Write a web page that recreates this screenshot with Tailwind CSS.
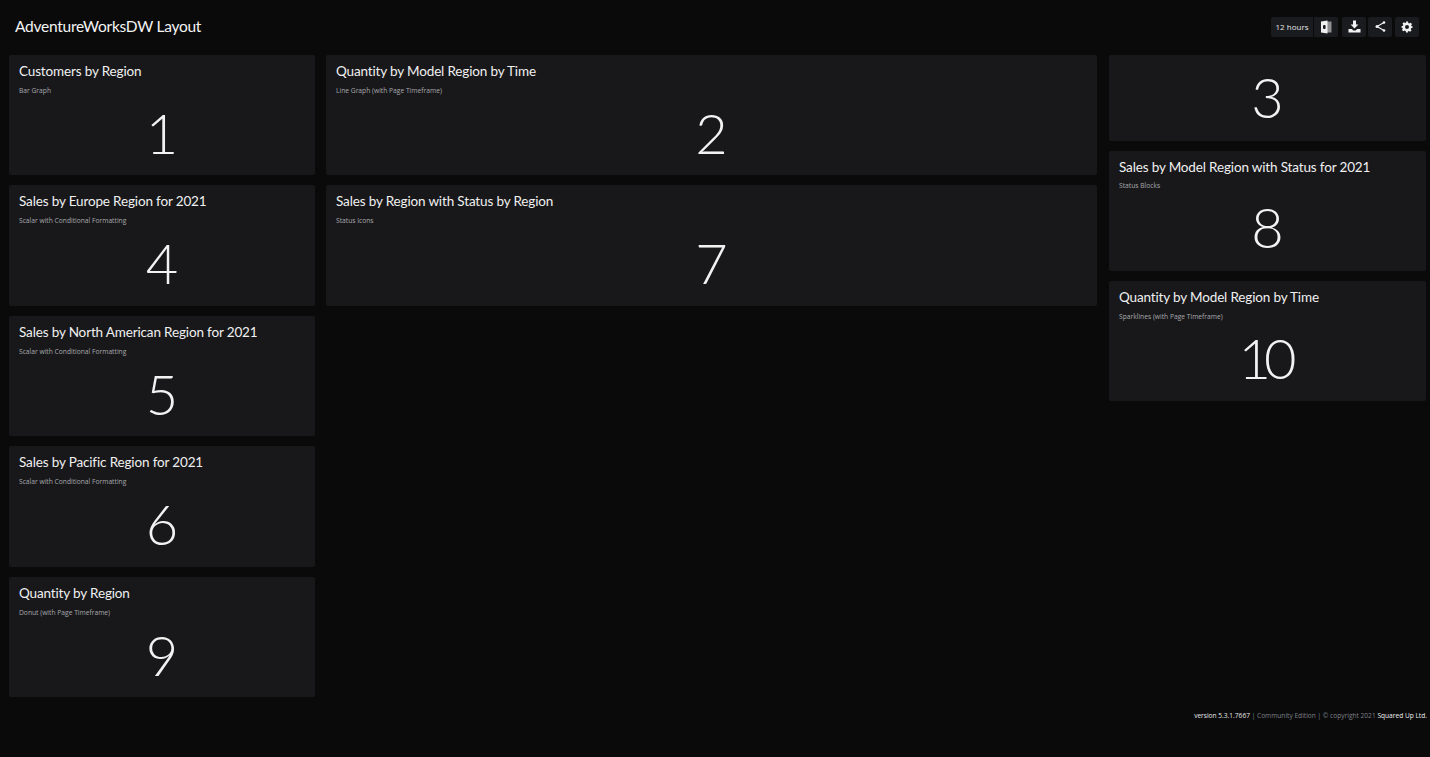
<!DOCTYPE html>
<html>
<head>
<meta charset="utf-8">
<script src="https://cdn.jsdelivr.net/npm/@tailwindcss/browser@4"></script>
</head>
<body class="bg-[#0a0a0b] font-['Open_Sans',sans-serif] text-[#f2f2f2]">
<div class="w-[1430px] h-[757px] overflow-hidden flex flex-col">
  <header class="h-[55px] flex items-center justify-between pl-[15px] pr-[11px] pb-[2px]">
    <h1 class="font-['Lato',sans-serif] text-[15.5px] tracking-[-0.25px] leading-none text-[#f4f4f4]">AdventureWorksDW Layout</h1>
    <div class="flex items-center">
      <div class="h-[20px] w-[42px] bg-[#1a1b1e] rounded-l-[2px] flex items-center justify-center text-[8px] text-[#e6e6e6] mr-[1px]">12 hours</div>
      <div class="h-[20px] w-[24px] bg-[#1a1b1e] rounded-r-[2px] flex items-center justify-center mr-[4px]">
        <svg width="12" height="14" viewBox="0 0 12 14"><path d="M6 1.500h5.500v11H6z" fill="#8f8f8f"/><path d="M1 1.500L7.500 .5v13L1 12.500z" fill="#efefef"/><rect x="3" y="5" width="2.600" height="4" rx="1" fill="#1a1b1e"/></svg>
      </div>
      <div class="h-[20px] w-[24px] bg-[#1a1b1e] rounded-[2px] flex items-center justify-center mr-[2px]">
        <svg width="13" height="13" viewBox="0 0 13 13" fill="#f2f2f2"><path d="M5 0.500h3v4h2.400L6.500 8.600 2.600 4.500H5z"/><path d="M0.500 9h3.400l1.400 1.400h2.400L9.100 9h3.400v3.500H.5z"/></svg>
      </div>
      <div class="h-[20px] w-[24px] bg-[#1a1b1e] rounded-[2px] flex items-center justify-center mr-[3px]">
        <svg width="13" height="13" viewBox="0 0 13 13" fill="#f2f2f2" stroke="#f2f2f2"><path d="M10 2.500L3 6.500l7 4" fill="none" stroke-width="1.100"/><circle cx="10" cy="2.500" r="1.300" stroke="none"/><circle cx="3" cy="6.500" r="1.500" stroke="none"/><circle cx="10" cy="10.500" r="1.300" stroke="none"/></svg>
      </div>
      <div class="h-[20px] w-[24px] bg-[#1a1b1e] rounded-[2px] flex items-center justify-center">
        <svg width="12" height="12" viewBox="0 0 24 24" fill="#f2f2f2"><path fill-rule="evenodd" d="M10 1h4l.6 3.100c.7.2 1.300.5 1.900.9l2.700-1.700 2.800 2.800-1.700 2.700c.4.6.7 1.200.9 1.900L23 10.300v3.400l-2.800.6c-.2.7-.5 1.300-.9 1.900l1.700 2.700-2.800 2.800-2.700-1.700c-.6.4-1.200.7-1.900.9L14 23h-4l-.6-3.100c-.7-.2-1.300-.5-1.900-.9l-2.700 1.700-2.800-2.800 1.700-2.700c-.4-.6-.7-1.200-.9-1.900L1 13.700v-3.400l2.800-.6c.2-.7.5-1.300.9-1.900L3 5.100l2.800-2.800L8.500 4c.6-.4 1.200-.7 1.900-.9zM12 8a4 4 0 1 0 0 8 4 4 0 0 0 0-8z"/></svg>
      </div>
    </div>
  </header>

  <main class="flex items-start pl-[9px] pr-[4px]">
    <div class="w-[306px] mr-[11px] flex flex-col gap-[10px]">
      <section class="h-[120.4px] bg-[#18181b] rounded-[2px] pl-[10px] pt-[8px] flex flex-col">
        <h2 class="font-['Lato',sans-serif] text-[13.5px] tracking-[-0.15px] leading-[17px] text-[#f0f0f0]">Customers by Region</h2>
        <p class="text-[6.7px] leading-[9px] mt-[6px] text-[#a8a8ab]">Bar Graph</p>
        <div class="font-['Lato',sans-serif] text-[56px] tracking-[-3px] leading-[64px] font-light text-center pr-[13px] mt-[6px]">1</div>
      </section>
      <section class="h-[120.4px] bg-[#18181b] rounded-[2px] pl-[10px] pt-[8px] flex flex-col">
        <h2 class="font-['Lato',sans-serif] text-[13.5px] tracking-[-0.15px] leading-[17px] text-[#f0f0f0]">Sales by Europe Region for 2021</h2>
        <p class="text-[6.7px] leading-[9px] mt-[6px] text-[#a8a8ab]">Scalar with Conditional Formatting</p>
        <div class="font-['Lato',sans-serif] text-[56px] tracking-[-3px] leading-[64px] font-light text-center pr-[13px] mt-[6px]">4</div>
      </section>
      <section class="h-[120.4px] bg-[#18181b] rounded-[2px] pl-[10px] pt-[8px] flex flex-col">
        <h2 class="font-['Lato',sans-serif] text-[13.5px] tracking-[-0.15px] leading-[17px] text-[#f0f0f0]">Sales by North American Region for 2021</h2>
        <p class="text-[6.7px] leading-[9px] mt-[6px] text-[#a8a8ab]">Scalar with Conditional Formatting</p>
        <div class="font-['Lato',sans-serif] text-[56px] tracking-[-3px] leading-[64px] font-light text-center pr-[13px] mt-[6px]">5</div>
      </section>
      <section class="h-[120.4px] bg-[#18181b] rounded-[2px] pl-[10px] pt-[8px] flex flex-col">
        <h2 class="font-['Lato',sans-serif] text-[13.5px] tracking-[-0.15px] leading-[17px] text-[#f0f0f0]">Sales by Pacific Region for 2021</h2>
        <p class="text-[6.7px] leading-[9px] mt-[6px] text-[#a8a8ab]">Scalar with Conditional Formatting</p>
        <div class="font-['Lato',sans-serif] text-[56px] tracking-[-3px] leading-[64px] font-light text-center pr-[13px] mt-[6px]">6</div>
      </section>
      <section class="h-[120.4px] bg-[#18181b] rounded-[2px] pl-[10px] pt-[8px] flex flex-col">
        <h2 class="font-['Lato',sans-serif] text-[13.5px] tracking-[-0.15px] leading-[17px] text-[#f0f0f0]">Quantity by Region</h2>
        <p class="text-[6.7px] leading-[9px] mt-[6px] text-[#a8a8ab]">Donut (with Page Timeframe)</p>
        <div class="font-['Lato',sans-serif] text-[56px] tracking-[-3px] leading-[64px] font-light text-center pr-[13px] mt-[6px]">9</div>
      </section>
    </div>
    <div class="w-[771px] mr-[12px] flex flex-col gap-[10px]">
      <section class="h-[120.4px] bg-[#18181b] rounded-[2px] pl-[10px] pt-[8px] flex flex-col">
        <h2 class="font-['Lato',sans-serif] text-[13.5px] tracking-[-0.15px] leading-[17px] text-[#f0f0f0]">Quantity by Model Region by Time</h2>
        <p class="text-[6.7px] leading-[9px] mt-[6px] text-[#a8a8ab]">Line Graph (with Page Timeframe)</p>
        <div class="font-['Lato',sans-serif] text-[56px] tracking-[-3px] leading-[64px] font-light text-center pr-[13px] mt-[6px]">2</div>
      </section>
      <section class="h-[120.4px] bg-[#18181b] rounded-[2px] pl-[10px] pt-[8px] flex flex-col">
        <h2 class="font-['Lato',sans-serif] text-[13.5px] tracking-[-0.15px] leading-[17px] text-[#f0f0f0]">Sales by Region with Status by Region</h2>
        <p class="text-[6.7px] leading-[9px] mt-[6px] text-[#a8a8ab]">Status Icons</p>
        <div class="font-['Lato',sans-serif] text-[56px] tracking-[-3px] leading-[64px] font-light text-center pr-[13px] mt-[6px]">7</div>
      </section>
    </div>
    <div class="w-[317px] flex flex-col gap-[10px]">
      <section class="h-[85.5px] bg-[#18181b] rounded-[2px] flex items-center justify-center pb-[1px] pr-[3px]">
        <div class="font-['Lato',sans-serif] text-[56px] tracking-[-3px] leading-[64px] font-light text-center">3</div>
      </section>
      <section class="h-[120.4px] bg-[#18181b] rounded-[2px] pl-[10px] pt-[8px] flex flex-col">
        <h2 class="font-['Lato',sans-serif] text-[13.5px] tracking-[-0.15px] leading-[17px] text-[#f0f0f0]">Sales by Model Region with Status for 2021</h2>
        <p class="text-[6.7px] leading-[9px] mt-[5px] text-[#a8a8ab]">Status Blocks</p>
        <div class="font-['Lato',sans-serif] text-[56px] tracking-[-3px] leading-[64px] font-light text-center pr-[13px] mt-[5px]">8</div>
      </section>
      <section class="h-[120.4px] bg-[#18181b] rounded-[2px] pl-[10px] pt-[8px] flex flex-col">
        <h2 class="font-['Lato',sans-serif] text-[13.5px] tracking-[-0.15px] leading-[17px] text-[#f0f0f0]">Quantity by Model Region by Time</h2>
        <p class="text-[6.7px] leading-[9px] mt-[6px] text-[#a8a8ab]">Sparklines (with Page Timeframe)</p>
        <div class="font-['Lato',sans-serif] text-[56px] tracking-[-7px] leading-[64px] font-light text-center pr-[17px] mt-[5px]">10</div>
      </section>
    </div>
  </main>

  <footer class="mt-[14px] pr-[3px] text-right text-[6.6px] leading-[10px] text-[#7d8087]">
    <span class="text-[#e8e8e8]">version 5.3.1.7667</span> | Community Edition | © copyright 2021 <span class="text-[#f2f2f2]">Squared Up Ltd.</span>
  </footer>
</div>
</body>
</html>
